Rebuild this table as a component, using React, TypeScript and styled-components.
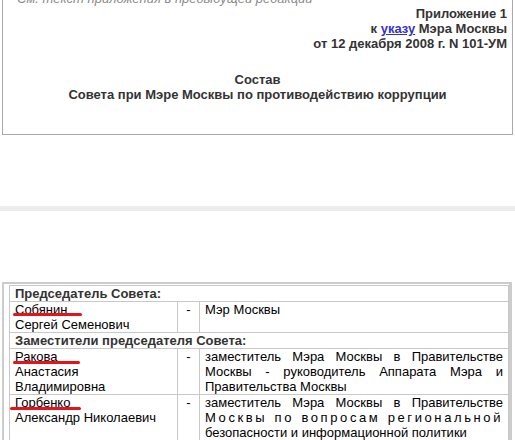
import React from "react";
import styled, { createGlobalStyle } from "styled-components";

const Global = createGlobalStyle`
  html, body {
    margin: 0;
    padding: 0;
    background: #ffffff;
    overflow: hidden;
  }
  body {
    font-family: "Liberation Sans", Arial, sans-serif;
    font-size: 13px;
    line-height: 15px;
    color: #000;
  }
`;

const Page = styled.div`
  width: 515px;
`;

const DocPanel = styled.div`
  margin: -10px 2px 0 2px;
  border: 1px solid #aaaaaa;
  padding: 0 5px 32px 5px;
`;

const Note = styled.div`
  padding-left: 9px;
  font-style: italic;
  color: #8a8a8a;
  white-space: nowrap;
`;

const Approval = styled.div`
  text-align: right;
  font-weight: bold;
  color: #333333;
`;

const DocLink = styled.a`
  color: #3333cc;
  text-decoration: underline;
`;

const Title = styled.div`
  margin-top: 21px;
  text-align: center;
  font-weight: bold;
  color: #333333;
`;

const Separator = styled.div`
  margin-top: 71px;
  height: 5px;
  background: #ececec;
`;

const TableFrame = styled.div`
  margin: 71px 3px 0 2px;
  border-top: 2px solid #cccccc;
  border-left: 2px solid #cccccc;
  border-right: 3px solid #cccccc;
  padding: 1px 0 0 5px;
`;

const Table = styled.table`
  border-collapse: collapse;
  table-layout: fixed;
  width: 499px;
`;

const Cell = styled.td<{ $align?: "left" | "center" | "justify" }>`
  border: 1px solid #c8c8c8;
  padding: 0 5px;
  vertical-align: top;
  text-align: ${(p) => p.$align ?? "left"};
  color: #000;
`;

const SectionCell = styled.td`
  border: 1px solid #c8c8c8;
  padding: 0 5px;
  font-weight: bold;
  color: #333333;
`;

const Line = styled.div<{ $justify?: boolean; $spacing?: number }>`
  white-space: nowrap;
  text-align: ${(p) => (p.$justify ? "justify" : "left")};
  text-align-last: ${(p) => (p.$justify ? "justify" : "auto")};
  letter-spacing: ${(p) => p.$spacing ?? 0}px;
`;

const Surname = styled.span`
  position: relative;
  display: inline-block;
  text-decoration: underline;
  color: #000;
`;

const Marker = styled.span<{ $left: number; $width: number; $top: number }>`
  position: absolute;
  left: ${(p) => p.$left}px;
  top: ${(p) => p.$top}px;
  width: ${(p) => p.$width}px;
  height: 3px;
  border-radius: 2px;
  background: #e3141b;
`;

type Member = {
  surname: string;
  rest: string[];
  marker: { left: number; width: number; top: number };
  position: { text: string; justify?: boolean; spacing?: number }[];
};

const sections: { title: string; members: Member[] }[] = [
  {
    title: "Председатель Совета:",
    members: [
      {
        surname: "Собянин",
        rest: ["Сергей Семенович"],
        marker: { left: -2, width: 69, top: 11 },
        position: [{ text: "Мэр Москвы" }],
      },
    ],
  },
  {
    title: "Заместители председателя Совета:",
    members: [
      {
        surname: "Ракова",
        rest: ["Анастасия", "Владимировна"],
        marker: { left: -2, width: 67, top: 12 },
        position: [
          { text: "заместитель Мэра Москвы в Правительстве", justify: true },
          { text: "Москвы - руководитель Аппарата Мэра и", justify: true },
          { text: "Правительства Москвы" },
        ],
      },
      {
        surname: "Горбенко",
        rest: ["Александр Николаевич"],
        marker: { left: -5, width: 71, top: 12 },
        position: [
          { text: "заместитель Мэра Москвы в Правительстве", justify: true },
          { text: "Москвы по вопросам региональной", justify: true, spacing: 2.6 },
          { text: "безопасности и информационной политики" },
        ],
      },
    ],
  },
];

export default function App() {
  return (
    <Page>
      <Global />
      <DocPanel>
        <Note>См. текст приложения в предыдущей редакции</Note>
        <Approval>Приложение 1</Approval>
        <Approval>
          к <DocLink href="#">указу</DocLink> Мэра Москвы
        </Approval>
        <Approval>от 12 декабря 2008 г. N 101-УМ</Approval>
        <Title>
          Состав
          <br />
          Совета при Мэре Москвы по противодействию коррупции
        </Title>
      </DocPanel>
      <Separator />
      <TableFrame>
        <Table>
          <colgroup>
            <col style={{ width: 168 }} />
            <col style={{ width: 22 }} />
            <col style={{ width: 309 }} />
          </colgroup>
          <tbody>
            {sections.map((s) => (
              <React.Fragment key={s.title}>
                <tr>
                  <SectionCell colSpan={3}>{s.title}</SectionCell>
                </tr>
                {s.members.map((m) => (
                  <tr key={m.surname}>
                    <Cell>
                      <Surname>
                        {m.surname}
                        <Marker
                          $left={m.marker.left}
                          $width={m.marker.width}
                          $top={m.marker.top}
                        />
                      </Surname>
                      {m.rest.map((r) => (
                        <Line key={r}>{r}</Line>
                      ))}
                    </Cell>
                    <Cell $align="center">-</Cell>
                    <Cell>
                      {m.position.map((p) => (
                        <Line key={p.text} $justify={p.justify} $spacing={p.spacing}>
                          {p.text}
                        </Line>
                      ))}
                    </Cell>
                  </tr>
                ))}
              </React.Fragment>
            ))}
          </tbody>
        </Table>
      </TableFrame>
    </Page>
  );
}
